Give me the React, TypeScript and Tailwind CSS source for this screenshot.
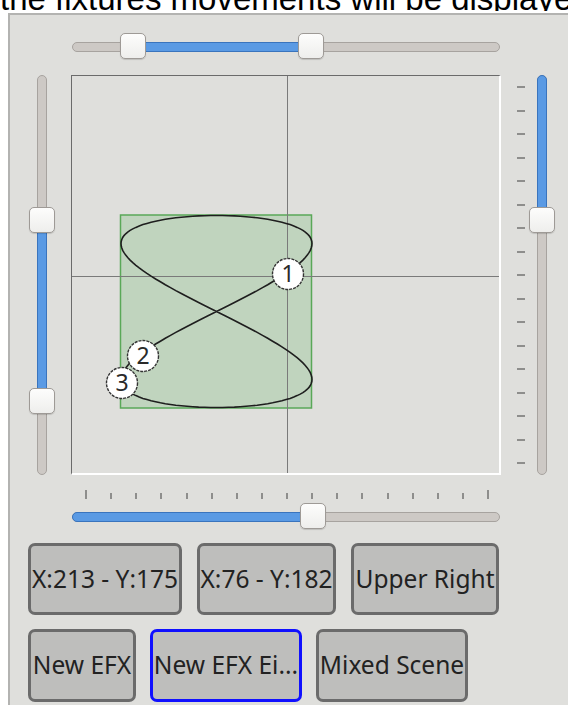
import React from 'react';

const trackCls = 'absolute rounded-full bg-[#cdc9c5] border border-[#a7a39f]';
const blueCls = 'absolute rounded-full bg-[#5a9ae4] border border-[#3a74bd]';
const handleCls =
  'absolute w-[26px] h-[26px] rounded-[5px] border border-[#9e9a96] bg-gradient-to-b from-[#fdfdfc] to-[#eeeeec] shadow-[0_1px_1px_rgba(0,0,0,0.15)]';

function HSlider({ handles, fill }: { handles: number[]; fill: [number, number] }) {
  return (
    <div className="relative w-[428px] h-[26px]">
      <div className={`${trackCls} left-0 right-0 top-[9px] h-[10px]`} />
      <div className={`${blueCls} top-[9px] h-[10px]`} style={{ left: fill[0], width: fill[1] - fill[0] }} />
      {handles.map(h => (
        <div key={h} className={`${handleCls} top-0`} style={{ left: h }} />
      ))}
    </div>
  );
}

function VSlider({ handles, fill }: { handles: number[]; fill: [number, number] }) {
  return (
    <div className="relative w-[26px] h-[400px]">
      <div className={`${trackCls} top-0 bottom-0 left-[8px] w-[10px]`} />
      <div className={`${blueCls} left-[8px] w-[10px]`} style={{ top: fill[0], height: fill[1] - fill[0] }} />
      {handles.map(h => (
        <div key={h} className={`${handleCls} left-0`} style={{ top: h }} />
      ))}
    </div>
  );
}

// figure eight path
function eightPath() {
  const cx = 144.5;
  const cy = 235.5;
  const a = 95.5;
  const b = 96;
  const pts: string[] = [];
  for (let i = 0; i <= 200; i++) {
    const t = (i / 200) * Math.PI * 2;
    const x = cx + a * Math.sin(2 * t);
    const y = cy - b * Math.cos(t);
    pts.push(`${i === 0 ? 'M' : 'L'}${x.toFixed(1)},${y.toFixed(1)}`);
  }
  return pts.join(' ') + ' Z';
}

function Marker({ x, y, n }: { x: number; y: number; n: string }) {
  return (
    <g>
      <circle cx={x} cy={y} r={15.5} fill="#ffffff" stroke="#333" strokeWidth={1.4} strokeDasharray="3 1" />
      <text
        x={x}
        y={y + 8}
        textAnchor="middle"
        fontSize={23}
        fontFamily="'Noto Sans', sans-serif"
        fill="#2a2a2a"
      >
        {n}
      </text>
    </g>
  );
}

function Btn({ label, w, active }: { label: string; w: string; active?: boolean }) {
  return (
    <div
      className={`${w} h-full flex items-center justify-center whitespace-nowrap rounded-[7px] border-[3px] bg-[#bebebc] text-[24.5px] text-[#222] font-['Noto_Sans',sans-serif] ${
        active ? 'border-[#1010ff]' : 'border-[#6b6b6b]'
      }`}
    >
      {label}
    </div>
  );
}

export default function App() {
  return (
    <div className="w-[568px] h-[705px] overflow-hidden bg-white">
      {/* cut off header text */}
      <div className="h-[13px]">
        <div className="h-[11px] overflow-hidden">
          <p className="mt-[-18px] text-[33px] leading-[33px] text-black whitespace-nowrap font-['Liberation_Sans',Arial,sans-serif]">
            the fixtures movements will be displayed
          </p>
        </div>
      </div>

      <div className="ml-[8px] h-[692px] border-l-2 border-t-2 border-[#b3b3b1] bg-[#dfdfdc]">
        <div className="pt-[18px] pl-[62px]">
          <HSlider handles={[48, 226]} fill={[60, 238]} />
        </div>

        <div className="mt-[16px] pl-[19px] flex h-[400px]">
          <VSlider handles={[132, 313]} fill={[140, 322]} />

          <div className="ml-[16px] w-[430px] h-[400px] border-t border-l border-[#6b6b6b] border-r-2 border-b-2 border-r-white border-b-white">
            <svg width="427" height="397" viewBox="0 0 427 397" className="block">
              <rect x={48.5} y={139} width={191} height={193} fill="#c0d4be" stroke="#5aa858" strokeWidth={1.5} />
              <line x1={215.5} y1={0} x2={215.5} y2={397} stroke="#7a7a7a" strokeWidth={1} />
              <line x1={0} y1={200.5} x2={427} y2={200.5} stroke="#7a7a7a" strokeWidth={1} />
              <path d={eightPath()} fill="none" stroke="#1e1e1e" strokeWidth={1.6} />
              <Marker x={50} y={307} n="3" />
              <Marker x={71} y={280} n="2" />
              <Marker x={216} y={198} n="1" />
            </svg>
          </div>

          <div className="ml-[16px] w-[8px] h-[400px] py-[11px] flex flex-col justify-between">
            {Array.from({ length: 17 }).map((_, i) => (
              <div key={i} className="h-[2px] w-[8px] bg-[#8e8e8c]" />
            ))}
          </div>

          <div className="ml-[4px]">
            <VSlider handles={[132]} fill={[0, 140]} />
          </div>
        </div>

        <div className="mt-[15px] ml-[75px] w-[404px] h-[9px] flex items-end justify-between">
          {Array.from({ length: 17 }).map((_, i) => (
            <div
              key={i}
              className={`w-[2px] bg-[#8e8e8c] ${i === 0 || i === 16 ? 'h-[9px]' : 'h-[6px]'}`}
            />
          ))}
        </div>

        <div className="mt-[4px] pl-[62px]">
          <HSlider handles={[228]} fill={[0, 240]} />
        </div>

        <div className="mt-[14px] ml-[18px] h-[72px] flex gap-[15px]">
          <Btn label="X:213 - Y:175" w="w-[154px]" />
          <Btn label="X:76 - Y:182" w="w-[139px]" />
          <Btn label="Upper Right" w="w-[148px]" />
        </div>
        <div className="mt-[14px] ml-[18px] h-[73px] flex gap-[14px]">
          <Btn label="New EFX" w="w-[108px]" />
          <Btn label="New EFX Ei..." w="w-[152px]" active />
          <Btn label="Mixed Scene" w="w-[152px]" />
        </div>
      </div>
    </div>
  );
}
